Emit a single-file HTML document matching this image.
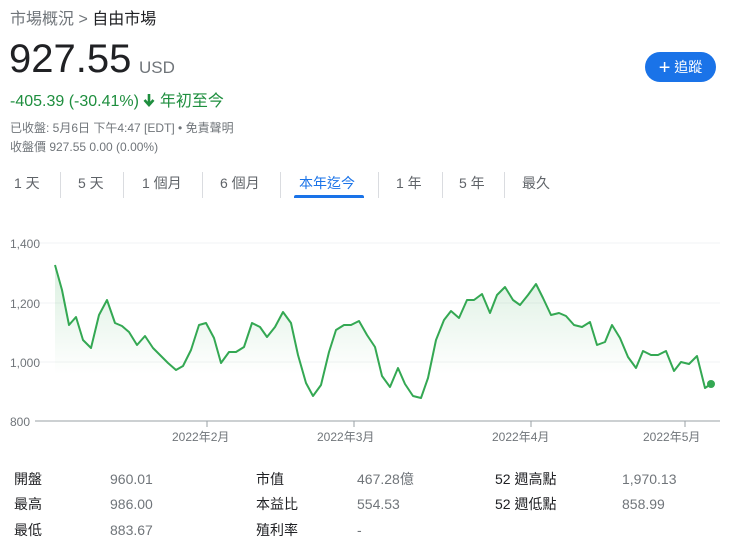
<!DOCTYPE html>
<html><head><meta charset="utf-8"><style>
body{margin:0;width:740px;height:549px;background:#fff;font-family:"Liberation Sans","Noto Sans CJK TC",sans-serif;position:relative;overflow:hidden;color:#202124}
.a{position:absolute;white-space:nowrap}
.tab{position:absolute;top:174px;font-size:14px;color:#5f6368;line-height:18px}
.sep{position:absolute;top:172px;width:1px;height:26px;background:#dadce0}
.l{font-size:14px;color:#202124;line-height:18px}
.v{font-size:14px;color:#70757a;line-height:18px}
</style></head><body>
<div class="a" style="left:10px;top:5px;font-size:16px;color:#70757a">市場概況 &gt; <span style="color:#202124">自由市場</span></div>
<div class="a" style="left:9px;top:37px;font-size:40px;color:#202124">927.55</div>
<div class="a" style="left:139px;top:58px;font-size:17px;color:#70757a">USD</div>
<div class="a" style="left:10px;top:87px;font-size:16px;color:#1e8e3e">-405.39 (-30.41%) <svg width="12" height="14" viewBox="0 0 12 14" style="vertical-align:-1px"><path d="M6 1v10M1.5 7L6 12l4.5-5" stroke="#1e8e3e" stroke-width="2.6" fill="none"/></svg> 年初至今</div>
<div class="a" style="left:10px;top:119px;font-size:12px;color:#70757a">已收盤: 5月6日 下午4:47 [EDT] • 免責聲明</div>
<div class="a" style="left:10px;top:138px;font-size:12px;color:#70757a">收盤價 927.55 0.00 (0.00%)</div>
<div class="a" style="left:645px;top:52px;width:71px;height:30px;background:#1a73e8;border-radius:15px;color:#fff;font-size:14px;line-height:30px;text-align:center"><span style="font-size:20px;vertical-align:-2px">+</span> 追蹤</div>
<div class="tab" style="left:14px">1 天</div><div class="sep" style="left:60px"></div>
<div class="tab" style="left:78px">5 天</div><div class="sep" style="left:123px"></div>
<div class="tab" style="left:142px">1 個月</div><div class="sep" style="left:202px"></div>
<div class="tab" style="left:220px">6 個月</div><div class="sep" style="left:280px"></div>
<div class="tab" style="left:299px;color:#1a73e8">本年迄今</div>
<div class="a" style="left:294px;top:195px;width:70px;height:3px;background:#1a73e8;border-radius:2px 2px 0 0"></div>
<div class="sep" style="left:378px"></div>
<div class="tab" style="left:396px">1 年</div><div class="sep" style="left:442px"></div>
<div class="tab" style="left:459px">5 年</div><div class="sep" style="left:504px"></div>
<div class="tab" style="left:522px">最久</div>
<svg class="a" style="left:0;top:230px" width="740" height="220" viewBox="0 230 740 220">
<defs><linearGradient id="g" x1="0" y1="0" x2="0" y2="1"><stop offset="0" stop-color="#34a853" stop-opacity="0.18"/><stop offset="0.7" stop-color="#34a853" stop-opacity="0"/></linearGradient></defs>
<g stroke="#f1f3f4" stroke-width="1"><line x1="35" y1="243" x2="720" y2="243"/><line x1="35" y1="303" x2="720" y2="303"/><line x1="35" y1="362" x2="720" y2="362"/></g>
<g font-size="12" fill="#70757a" font-family="Liberation Sans,sans-serif"><text x="10" y="248">1,400</text><text x="10" y="308">1,200</text><text x="10" y="367">1,000</text><text x="10" y="426">800</text>
<text x="172" y="441">2022年2月</text><text x="317" y="441">2022年3月</text><text x="492" y="441">2022年4月</text><text x="643" y="441">2022年5月</text></g>
<line x1="35" y1="421" x2="720" y2="421" stroke="#9aa0a6" stroke-width="1"/>
<g stroke="#9aa0a6"><line x1="207" y1="421" x2="207" y2="427"/><line x1="354" y1="421" x2="354" y2="427"/><line x1="531" y1="421" x2="531" y2="427"/><line x1="685" y1="421" x2="685" y2="427"/></g>
<polygon fill="url(#g)" points="55,421 55,265 62,290 69,325 76,317 83,340 91,348 99,315 107,300 115,323 122,326 129,332 137,345 145,336 153,348 160,355 168,363 176,370 183,366 191,350 199,325 206,323 214,338 221,363 229,352 236,352 244,347 252,323 260,327 267,337 275,327 283,312 291,323 298,355 306,383 313,396 321,385 329,352 336,330 344,325 351,325 359,321 367,335 375,347 382,376 390,387 398,368 405,384 413,396 421,398 428,378 436,340 444,320 451,311 459,318 467,300 474,300 482,294 490,313 497,295 505,287 513,300 520,305 528,295 536,284 543,298 551,315 559,313 566,316 574,325 582,327 590,322 597,345 605,342 612,325 620,338 628,357 636,368 643,351 651,355 658,355 666,351 674,371 681,362 689,364 697,356 705,388 711,384 711,421"/>
<polyline fill="none" stroke="#34a853" stroke-width="2" stroke-linejoin="round" points="55,265 62,290 69,325 76,317 83,340 91,348 99,315 107,300 115,323 122,326 129,332 137,345 145,336 153,348 160,355 168,363 176,370 183,366 191,350 199,325 206,323 214,338 221,363 229,352 236,352 244,347 252,323 260,327 267,337 275,327 283,312 291,323 298,355 306,383 313,396 321,385 329,352 336,330 344,325 351,325 359,321 367,335 375,347 382,376 390,387 398,368 405,384 413,396 421,398 428,378 436,340 444,320 451,311 459,318 467,300 474,300 482,294 490,313 497,295 505,287 513,300 520,305 528,295 536,284 543,298 551,315 559,313 566,316 574,325 582,327 590,322 597,345 605,342 612,325 620,338 628,357 636,368 643,351 651,355 658,355 666,351 674,371 681,362 689,364 697,356 705,388 711,384"/>
<circle cx="711" cy="384" r="4" fill="#34a853"/>
</svg>
<div class="a l" style="left:14px;top:470px">開盤</div><div class="a v" style="left:110px;top:470px">960.01</div>
<div class="a l" style="left:14px;top:495px">最高</div><div class="a v" style="left:110px;top:495px">986.00</div>
<div class="a l" style="left:14px;top:521px">最低</div><div class="a v" style="left:110px;top:521px">883.67</div>
<div class="a l" style="left:256px;top:470px">市值</div><div class="a v" style="left:357px;top:470px">467.28億</div>
<div class="a l" style="left:256px;top:495px">本益比</div><div class="a v" style="left:357px;top:495px">554.53</div>
<div class="a l" style="left:256px;top:521px">殖利率</div><div class="a v" style="left:357px;top:521px">-</div>
<div class="a l" style="left:495px;top:470px">52 週高點</div><div class="a v" style="left:622px;top:470px">1,970.13</div>
<div class="a l" style="left:495px;top:495px">52 週低點</div><div class="a v" style="left:622px;top:495px">858.99</div>
</body></html>
